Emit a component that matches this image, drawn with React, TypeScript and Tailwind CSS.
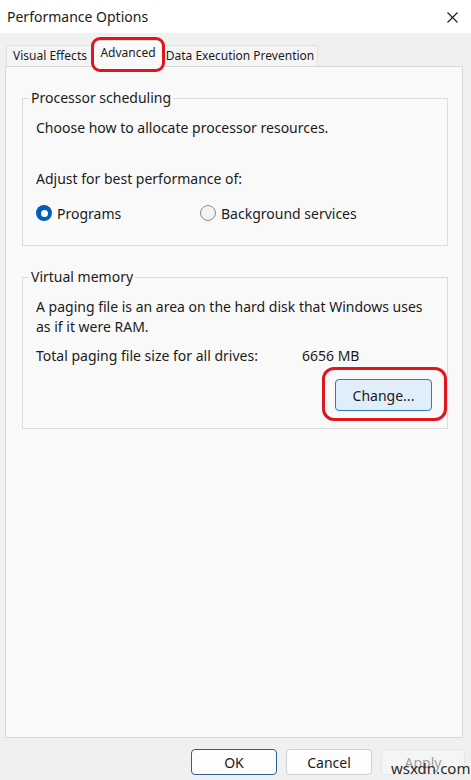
import React from "react";

const font = { fontFamily: '"Noto Sans", "Open Sans", sans-serif' };

function Radio({ checked, label }: { checked?: boolean; label: string }) {
  return (
    <label className="flex items-center gap-[5px] h-5">
      {checked ? (
        <span className="w-[16px] h-[16px] rounded-full bg-[#005fb8] flex items-center justify-center">
          <span className="w-[7px] h-[7px] rounded-full bg-white" />
        </span>
      ) : (
        <span className="w-[16px] h-[16px] rounded-full border border-[#8a8a8a] bg-[#f3f3f3]" />
      )}
      <span>{label}</span>
    </label>
  );
}

export default function App() {
  return (
    <div
      className="w-[471px] h-[780px] bg-[#f0f0f0] text-[#1b1b1b] flex flex-col overflow-hidden relative"
      style={font}
    >
      {/* title bar */}
      <div className="h-[33px] bg-white flex items-center justify-between pl-[7px] pr-[13px] text-[14px]">
        <span>Performance Options</span>
        <svg width="11" height="11" viewBox="0 0 11 11" className="mt-[1px]">
          <path d="M0.5 0.5 L10.5 10.5 M10.5 0.5 L0.5 10.5" stroke="#1b1b1b" strokeWidth="1.1" />
        </svg>
      </div>

      {/* tabs */}
      <div className="h-[33px] flex items-end pl-[6px] text-[12px]">
        <div className="w-[87px] h-[21px] bg-[#f4f4f4] border border-b-0 border-r-0 border-[#e2e2e2] flex items-center justify-center">
          Visual Effects
        </div>
        <div className="relative -mb-px w-[70px] h-[27px] bg-[#f9f9f9] border border-b-0 border-[#d9d9d9] flex justify-center pt-[3px] z-10">
          Advanced
          <div className="absolute -left-[3px] -right-[3px] -top-[4px] -bottom-[5px] border-[3px] border-[#e0161f] rounded-[9px]" />
        </div>
        <div className="w-[155px] h-[21px] bg-[#f4f4f4] border border-b-0 border-l-0 border-[#e2e2e2] flex items-center justify-center">
          Data Execution Prevention
        </div>
      </div>

      {/* panel */}
      <div className="ml-[5px] mr-[8px] h-[672px] bg-[#f9f9f9] border border-[#d9d9d9] pt-[21px] pl-[16px] pr-[14px] text-[14px] flex flex-col gap-[21px]">
        <fieldset className="border border-[#dcdcdc] pl-[13px] pr-[14px] pb-[22px]">
          <legend className="-ml-[7px] px-[2px] leading-5">Processor scheduling</legend>
          <div className="pt-[10px] leading-5">Choose how to allocate processor resources.</div>
          <div className="mt-[31px] leading-5">Adjust for best performance of:</div>
          <div className="mt-[14px] flex">
            <div className="w-[164px]">
              <Radio checked label="Programs" />
            </div>
            <Radio label="Background services" />
          </div>
        </fieldset>

        <fieldset className="border border-[#dcdcdc] pl-[13px] pr-[15px] pb-[17px]">
          <legend className="-ml-[7px] px-[2px] leading-5">Virtual memory</legend>
          <div className="pt-[10px] leading-5">
            A paging file is an area on the hard disk that Windows uses
            <br />
            as if it were RAM.
          </div>
          <div className="mt-[9px] flex leading-5">
            <span className="w-[266px]">Total paging file size for all drives:</span>
            <span>6656 MB</span>
          </div>
          <div className="mt-[13px] flex justify-end">
            <div className="relative">
              <button className="w-[97px] h-[32px] rounded-[4px] bg-[#e0eef9] border border-[#2f78c2] text-[14px]">
                Change...
              </button>
              <div className="absolute -left-[13px] -right-[15px] -top-[12px] -bottom-[10px] border-[3px] border-[#e0161f] rounded-[12px]" />
            </div>
          </div>
        </fieldset>
      </div>

      {/* bottom buttons */}
      <div className="mt-[11px] flex justify-end gap-[9px] pr-[6px] text-[14px]">
        <button className="w-[86px] h-[26px] rounded-[4px] bg-[#fdfdfd] border border-[#2f5f8f]">OK</button>
        <button className="w-[86px] h-[26px] rounded-[4px] bg-[#fdfdfd] border border-[#d0d0d0]">Cancel</button>
        <button className="w-[84px] h-[26px] rounded-[4px] bg-[#f5f5f5] border border-[#e5e5e5] text-[#a0a0a0]">
          Apply
        </button>
      </div>

      <div className="absolute left-[391px] top-[758px] text-[15px] text-[#2b2b2b] leading-5">wsxdn.com</div>
    </div>
  );
}
